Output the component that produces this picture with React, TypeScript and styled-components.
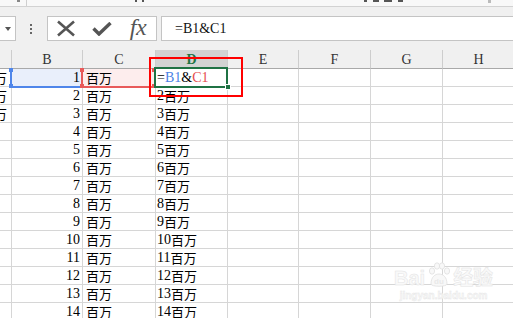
import React from "react";
import styled, { createGlobalStyle } from "styled-components";

const GlobalStyle = createGlobalStyle`
  html, body { margin: 0; padding: 0; background: #fff; overflow: hidden; }
  body { font-family: "Liberation Serif", "Noto Sans CJK SC", serif; }
`;

const Page = styled.div`
  position: relative;
  width: 513px;
  height: 318px;
  overflow: hidden;
  background: #fff;
`;

const TopStrip = styled.div`
  height: 6px;
  background: #f8f8f8;
  border-bottom: 1px solid #d2d2d2;
  display: flex;
  align-items: flex-start;
`;

const Mark = styled.span<{ $ml: number; $w: number; $h: number; $c: string }>`
  display: block;
  flex: none;
  margin-left: ${(p) => p.$ml}px;
  width: ${(p) => p.$w}px;
  height: ${(p) => p.$h}px;
  background: ${(p) => p.$c};
`;

const FormulaBand = styled.div`
  height: 43px;
  box-sizing: border-box;
  background: #f0f0f0;
  display: flex;
  align-items: flex-start;
  padding-top: 9px;
`;

const NameBox = styled.div`
  box-sizing: border-box;
  width: 17px;
  height: 25px;
  margin-left: -1px;
  background: #fff;
  border: 1px solid #c4c4c4;
  display: flex;
  align-items: center;
  padding-left: 5px;
`;

const Arrow = styled.span`
  width: 0;
  height: 0;
  border-left: 3.5px solid transparent;
  border-right: 3.5px solid transparent;
  border-top: 4px solid #555;
`;

const DotsCol = styled.div`
  width: 2px;
  height: 25px;
  margin-left: 14px;
  margin-right: 15px;
  display: flex;
  flex-direction: column;
  justify-content: center;
  gap: 2px;
`;

const Dot = styled.span`
  width: 2px;
  height: 2px;
  background: #666;
`;

const ButtonGroup = styled.div`
  box-sizing: border-box;
  width: 110px;
  height: 25px;
  background: #fff;
  border: 1px solid #c4c4c4;
  display: flex;
`;

const IconSlot = styled.div`
  width: 36px;
  height: 23px;
  display: flex;
  align-items: center;
  justify-content: center;
  color: #555;
`;

const Fx = styled.span`
  font-family: "Liberation Serif", serif;
  font-style: italic;
  font-size: 24px;
  line-height: 1;
  color: #555;
  letter-spacing: -0.5px;
  margin-top: -3px;
`;

const FormulaInput = styled.div`
  box-sizing: border-box;
  flex: 1;
  height: 25px;
  margin-left: 4px;
  margin-right: -2px;
  background: #fff;
  border: 1px solid #c4c4c4;
  display: flex;
  align-items: center;
  padding-left: 13px;
  font-size: 14px;
  color: #111;
`;

const Sheet = styled.div`
  position: relative;
  display: grid;
  grid-template-columns: 12px 71px 73px 72px 71px 72px 72px 72px;
`;

const HeadCell = styled.div<{ $active?: boolean }>`
  box-sizing: border-box;
  height: 19px;
  background: ${(p) => (p.$active ? "#d3d3d3" : "#f0f0f0")};
  border-right: 1px solid #cdcdcd;
  border-bottom: 1px solid #a9a9a9;
  display: flex;
  align-items: center;
  justify-content: center;
  padding-top: 2px;
  font-size: 14px;
  color: ${(p) => (p.$active ? "#1f7344" : "#333")};
  font-weight: ${(p) => (p.$active ? 700 : 400)};
`;

const Cell = styled.div<{ $align?: "left" | "right"; $bg?: string; $pl?: number; $pr?: number; $clip?: boolean }>`
  position: relative;
  box-sizing: border-box;
  height: 18px;
  border-right: 1px solid #d6d6d6;
  border-bottom: 1px solid #d6d6d6;
  background: ${(p) => p.$bg ?? "#fff"};
  display: flex;
  align-items: center;
  justify-content: ${(p) => (p.$align === "right" ? "flex-end" : "flex-start")};
  padding-left: ${(p) => p.$pl ?? 1}px;
  padding-right: ${(p) => p.$pr ?? 2}px;
  font-size: 14px;
  line-height: 17px;
  color: #000;
  white-space: nowrap;
  overflow: ${(p) => (p.$clip ? "hidden" : "visible")};
`;

const Cjk = styled.span`
  font-family: "Noto Sans CJK SC", sans-serif;
  font-size: 13px;
  font-weight: 400;
`;

const RefEdge = styled.div<{ $color: string }>`
  position: absolute;
  left: -2px;
  top: -1px;
  right: -1px;
  bottom: -2px;
  border-left: 2px solid ${(p) => p.$color};
  border-bottom: 2px solid ${(p) => p.$color};
  pointer-events: none;
  z-index: 2;
`;

const Handle = styled.span<{ $color: string; $pos: "tl" | "bl" | "tr" | "br" }>`
  position: absolute;
  width: 4px;
  height: 4px;
  background: ${(p) => p.$color};
  z-index: 3;
  ${(p) => (p.$pos[0] === "t" ? "top: -1px;" : "bottom: -2px;")}
  ${(p) => (p.$pos[1] === "l" ? "left: -3px;" : "right: -1px;")}
`;

const ActiveFrame = styled.div`
  position: absolute;
  left: -2px;
  top: -2px;
  right: -1px;
  bottom: -2px;
  border: 2px solid #1f7244;
  pointer-events: none;
  z-index: 4;
`;

const FillHandle = styled.span`
  position: absolute;
  right: -4px;
  bottom: -4px;
  width: 4px;
  height: 4px;
  background: #1f7244;
  border: 1px solid #fff;
  z-index: 5;
`;

const Ref = styled.span<{ $c: string }>`
  color: ${(p) => p.$c};
`;

const Annotation = styled.div`
  position: absolute;
  left: 149px;
  top: 7px;
  width: 94px;
  height: 40px;
  box-sizing: border-box;
  border: 2px solid #f00;
  z-index: 6;
  pointer-events: none;
`;

const Watermark = styled.div`
  position: absolute;
  left: 394px;
  top: 262px;
  display: flex;
  flex-direction: column;
  align-items: center;
  color: #f9f9f9;
  pointer-events: none;
  z-index: 7;
`;

const WmTop = styled.div`
  display: flex;
  align-items: flex-end;
  gap: 2px;
  font-family: "Liberation Sans", "Noto Sans CJK SC", sans-serif;
  font-size: 20px;
  font-weight: 700;
  line-height: 1;
  -webkit-text-stroke: 0.5px #e4e4e4;
`;

const WmBottom = styled.div`
  font-family: "Liberation Sans", sans-serif;
  font-size: 10px;
  font-weight: 700;
  margin-top: 2px;
  -webkit-text-stroke: 0.4px #e6e6e6;
`;

const cols = ["", "B", "C", "D", "E", "F", "G", "H"];
const rows = Array.from({ length: 14 }, (_, i) => i + 1);

export default function App() {
  return (
    <Page>
      <GlobalStyle />
      <TopStrip>
        <Mark $ml={17} $w={3} $h={2} $c="#888" />
        <Mark $ml={6} $w={1} $h={6} $c="#cfcfcf" />
        <Mark $ml={108} $w={2} $h={2} $c="#555" />
        <Mark $ml={5} $w={2} $h={2} $c="#555" />
        <Mark $ml={220} $w={3} $h={2} $c="#555" />
        <Mark $ml={6} $w={6} $h={2} $c="#555" />
        <Mark $ml={5} $w={8} $h={2} $c="#555" />
        <Mark $ml={6} $w={5} $h={2} $c="#555" />
        <Mark $ml={85} $w={3} $h={3} $c="#bbb" />
      </TopStrip>
      <FormulaBand>
        <NameBox>
          <Arrow />
        </NameBox>
        <DotsCol>
          <Dot />
          <Dot />
          <Dot />
        </DotsCol>
        <ButtonGroup>
          <IconSlot>
            <svg width="20" height="17" viewBox="0 0 20 17">
              <path d="M2 1.5 L18 15.5 M18 1.5 L2 15.5" stroke="#555" strokeWidth="2.6" fill="none" />
            </svg>
          </IconSlot>
          <IconSlot>
            <svg width="20" height="14" viewBox="0 0 20 14">
              <path d="M1.5 6.5 L7 12 L18.5 1" stroke="#555" strokeWidth="3.4" fill="none" />
            </svg>
          </IconSlot>
          <IconSlot>
            <Fx>fx</Fx>
          </IconSlot>
        </ButtonGroup>
        <FormulaInput>=B1&amp;C1</FormulaInput>
      </FormulaBand>
      <Sheet>
        {cols.map((c) => (
          <HeadCell key={c || "A"} $active={c === "D"}>
            {c}
          </HeadCell>
        ))}
        {rows.map((r) => (
          <React.Fragment key={r}>
            <Cell $align="right" $pr={4} $pl={0} $clip>
              {r <= 3 ? <Cjk>百万</Cjk> : null}
            </Cell>
            <Cell $align="right" $pr={2} $bg={r === 1 ? "#e9effb" : undefined}>
              {r}
              {r === 1 && (
                <>
                  <RefEdge $color="#4f86ea" />
                  <Handle $color="#4f86ea" $pos="tl" />
                  <Handle $color="#4f86ea" $pos="bl" />
                </>
              )}
            </Cell>
            <Cell $pl={3} $bg={r === 1 ? "#fdeded" : undefined}>
              <Cjk>百万</Cjk>
              {r === 1 && (
                <>
                  <RefEdge $color="#e85a5a" />
                  <Handle $color="#e85a5a" $pos="tl" />
                  <Handle $color="#e85a5a" $pos="bl" />
                  <Handle $color="#e85a5a" $pos="tr" />
                  <Handle $color="#e85a5a" $pos="br" />
                </>
              )}
            </Cell>
            <Cell $pl={1}>
              {r === 1 ? (
                <>
                  =<Ref $c="#4a82e6">B1</Ref>&amp;<Ref $c="#e64c4c">C1</Ref>
                  <ActiveFrame />
                  <FillHandle />
                </>
              ) : (
                <>
                  {r}
                  <Cjk>百万</Cjk>
                </>
              )}
            </Cell>
            <Cell />
            <Cell />
            <Cell />
            <Cell />
          </React.Fragment>
        ))}
        <Annotation />
      </Sheet>
      <Watermark>
        <WmTop>
          <span>Bai</span>
          <svg width="24" height="26" viewBox="0 0 24 26">
            <g fill="#f8f8f8" stroke="#e0e0e0" strokeWidth="0.8">
              <ellipse cx="5" cy="9" rx="2.6" ry="3.2" />
              <ellipse cx="10" cy="4" rx="2.6" ry="3.2" />
              <ellipse cx="15" cy="4" rx="2.6" ry="3.2" />
              <ellipse cx="20" cy="9" rx="2.6" ry="3.2" />
              <path d="M4 22 C4 15 8 12 12 12 C16 12 20 15 20 22 C20 25 4 25 4 22 Z" />
            </g>
            <text x="12" y="22" fontSize="8" textAnchor="middle" fill="#e8e8e8" fontFamily="Liberation Sans" fontWeight="700">du</text>
          </svg>
          <span>经验</span>
        </WmTop>
        <WmBottom>jingyan.baidu.com</WmBottom>
      </Watermark>
    </Page>
  );
}
